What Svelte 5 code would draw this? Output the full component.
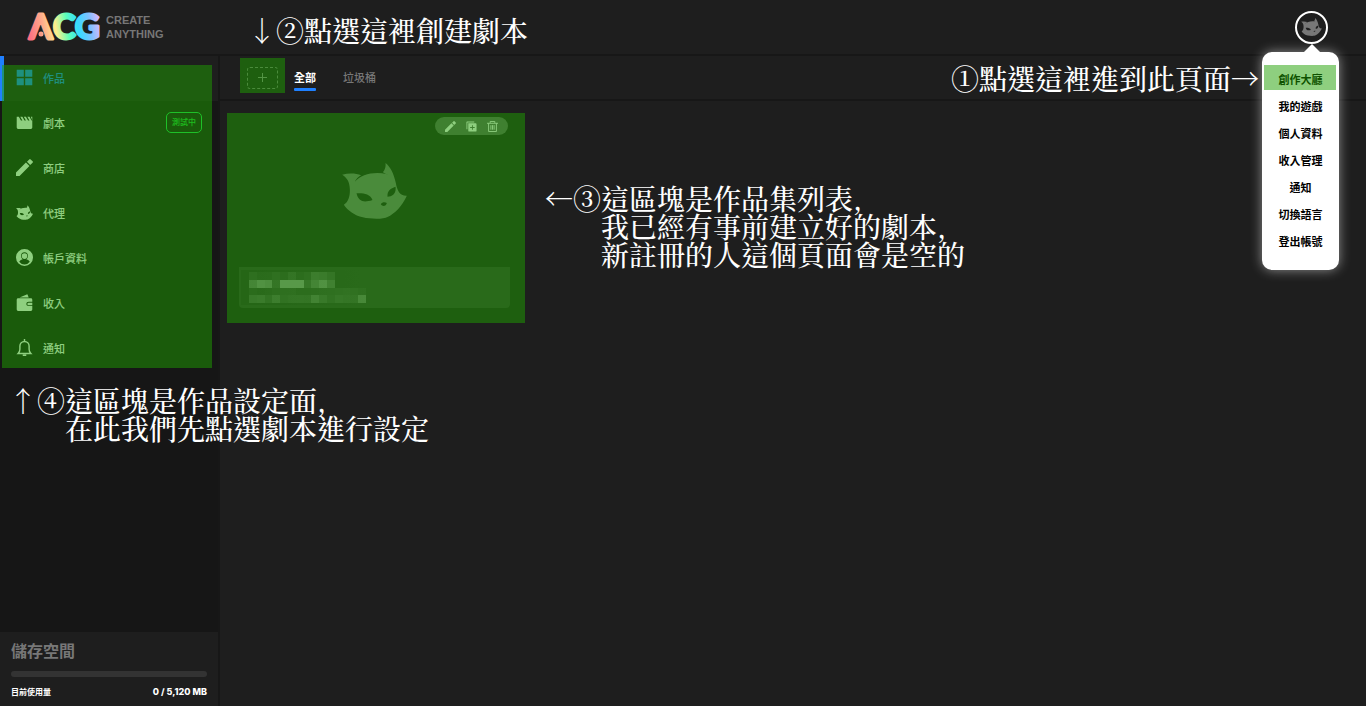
<script lang="ts">
	interface NavItem {
		icon: string;
		label: string;
		badge?: string;
	}

	const nav: NavItem[] = [
		{ icon: 'grid', label: '作品' },
		{ icon: 'clap', label: '劇本', badge: '測試中' },
		{ icon: 'pencil', label: '商店' },
		{ icon: 'cat', label: '代理' },
		{ icon: 'user', label: '帳戶資料' },
		{ icon: 'wallet', label: '收入' },
		{ icon: 'bell', label: '通知' }
	];
	const menu = ['創作大廳', '我的遊戲', '個人資料', '收入管理', '通知', '切換語言', '登出帳號'];

	// brightness of each blurred cell, in percent
	const mosaic = [
		[9, 5, 5, 9, 6, 13, 5, 8, 20, 18, 12, 0, 0, 0, 0],
		[30, 42, 38, 14, 48, 48, 48, 15, 28, 40, 24, 0, 0, 0, 0],
		[6, 4, 5, 7, 8, 8, 5, 5, 6, 7, 7, 8, 9, 8, 6],
		[18, 20, 12, 22, 11, 13, 13, 12, 26, 16, 9, 14, 12, 11, 30]
	];

	let current = $state('作品');
	let tab = $state('全部');
</script>

{#snippet icon(name: string)}
	{#if name === 'cat'}
		<svg class="icon" viewBox="0 0 194 168" aria-hidden="true">
			<path
				fill="currentColor"
				fill-rule="evenodd"
				d="M0 35C20 30 42 31 57 37C48 42 42 48 38 56C57 36 91 25 133 33L138 36L122 28C130 19 131 9 130 0C145 12 154 30 161 60C165 83 173 99 194 98C180 130 157 152 136 162C125 169 87 169 62 163C37 157 17 143 5 125C20 116 24 96 23 77C22 57 16 45 0 35ZM43 91C49 116 65 120 91 111C83 91 62 90 43 91ZM136 101C135 84 144 76 160 71C163 91 151 100 136 101ZM116 124C120 117 128 117 134 120C132 130 121 132 116 124Z"
			/>
		</svg>
	{:else}
		<svg class="icon" viewBox="0 0 24 24" fill="currentColor" aria-hidden="true">
			{#if name === 'grid'}
				<path d="M1 1h10v10H1zM13 1h10v10H13zM1 13h10v10H1zM13 13h10v10H13z" />
			{:else if name === 'clap'}
				<path d="M1 4h3l3 5h2L6 4h3l3 5h2l-3-5h3l3 5h2l-3-5h3l3 5h1l-2-5h2v15q0 2-2 2H3q-2 0-2-2z" />
			{:else if name === 'pencil'}
				<path d="M0 19V24h5L19 10 14 5zM23.400 5.300q1-1 0-2L20.700.600q-1-1-2 0L15.500 4 20 8.500z" />
			{:else if name === 'user'}
				<path
					fill-rule="evenodd"
					d="M12 0a12 12 0 1 0 0 24 12 12 0 0 0 0-24zM4.500 18q2-3 5-3.500C5.500 11 6.500 4.500 12 4.500s6.500 6.500 2.500 10q3 .5 5 3.500-3 4-7.500 4t-7.500-4z"
				/>
				<circle cx="12" cy="10" r="4" />
			{:else if name === 'wallet'}
				<path d="M5 5 16 .5l2 4.500z" />
				<path
					fill-rule="evenodd"
					d="M3 6h18q2 0 2 2v3h-5q-3.500 0-3.500 3t3.500 3h5v5q0 2-2 2H3q-2 0-2-2V8q0-2 2-2z"
				/>
				<path d="M18 12.200h5v3.600h-5q-2 0-2-1.800t2-1.800z" />
			{:else if name === 'bell'}
				<path
					fill="none"
					stroke="currentColor"
					stroke-width="2"
					d="M12 0v3M3 20.500h18c-2-2-2.500-3-2.500-6V10a6.500 6.500 0 0 0-13 0v4.500c0 3-.5 4-2.500 6zM9.500 23h5"
				/>
			{:else if name === 'copy'}
				<path d="M1 2q0-1 1-1h16v2H3v15H1z" />
				<path fill-rule="evenodd" d="M5 5h16q2 0 2 2v14q0 2-2 2H7q-2 0-2-2zM13 9v4H9v2h4v4h2v-4h4v-2h-4V9z" />
			{:else if name === 'trash'}
				<path
					fill="none"
					stroke="currentColor"
					stroke-width="2"
					d="M0 5h24M7 4V1h10v3M3.500 5v18h17V5M8.500 9v10M12 9v10M15.500 9v10"
				/>
			{/if}
		</svg>
	{/if}
{/snippet}

<div class="page">
	<header class="top">
		<a class="brand" href="#home">
			<svg class="mark" viewBox="0 0 73 28" role="img" aria-label="ACG">
				<linearGradient id="rainbow" gradientUnits="userSpaceOnUse" x1="0" y1="20" x2="73" y2="8">
					<stop offset="0" stop-color="#ff6b80" />
					<stop offset="0.22" stop-color="#ffae8c" />
					<stop offset="0.38" stop-color="#fff08c" />
					<stop offset="0.54" stop-color="#5dffb8" />
					<stop offset="0.68" stop-color="#35dcff" />
					<stop offset="0.84" stop-color="#7cc0ff" />
					<stop offset="1" stop-color="#e4b8ff" />
				</linearGradient>
				<g fill="url(#rainbow)" stroke="url(#rainbow)" stroke-width="3" stroke-linejoin="round">
					<text x="1" y="26">Λ</text>
					<text x="25" y="26">C</text>
					<text x="47" y="26">G</text>
					<circle cx="13" cy="21" r="1" />
				</g>
			</svg>
			<span class="slogan">CREATE<br />ANYTHING</span>
		</a>
		<div class="account">
			<button class="avatar" aria-label="帳號">{@render icon('cat')}</button>
			<nav class="menu">
				{#each menu as item, i (item)}
					<a href="#{item}" class:marked={i === 0}>{item}</a>
				{/each}
			</nav>
		</div>
	</header>

	<aside class="side">
		<nav class="nav">
			{#each nav as item (item.label)}
				<a
					href="#{item.label}"
					class:active={current === item.label}
					onclick={() => (current = item.label)}
				>
					{@render icon(item.icon)}
					<span>{item.label}</span>
					{#if item.badge}<small class="badge">{item.badge}</small>{/if}
				</a>
			{/each}
			<div class="hl hl-nav"></div>
		</nav>
		<section class="storage">
			<h2>儲存空間</h2>
			<div class="bar"></div>
			<div class="usage"><span>目前使用量</span><b>0 / 5,120 MB</b></div>
		</section>
	</aside>

	<main class="main">
		<div class="tabs">
			<div class="create">
				<button aria-label="新增">
					<svg viewBox="0 0 9 9" aria-hidden="true"><path d="M4.500 0v9M0 4.500h9" /></svg>
				</button>
				<div class="hl hl-create"></div>
			</div>
			{#each ['全部', '垃圾桶'] as name (name)}
				<button class="tab" class:on={tab === name} onclick={() => (tab = name)}>{name}</button>
			{/each}
		</div>
		<div class="list">
			<article class="card">
				<div class="cover">{@render icon('cat')}</div>
				<div class="info">
					<div class="mosaic">
						{#each mosaic as row}
							{#each row as level}
								<i style="opacity: {level / 100}"></i>
							{/each}
						{/each}
					</div>
				</div>
				<div class="tools">
					<button aria-label="編輯">{@render icon('pencil')}</button>
					<button aria-label="複製">{@render icon('copy')}</button>
					<button aria-label="刪除">{@render icon('trash')}</button>
				</div>
				<div class="hl hl-card"></div>
			</article>
		</div>
	</main>

	<div class="note n1"><p>①點選這裡進到此頁面→</p></div>
	<div class="note n2">
		<span class="arrow">↓</span><span>②</span>
		<p>點選這裡創建劇本</p>
	</div>
	<div class="note n3">
		<span class="arrow">←</span><span>③</span>
		<p>這區塊是作品集列表,<br />我已經有事前建立好的劇本,<br />新註冊的人這個頁面會是空的</p>
	</div>
	<div class="note n4">
		<span class="arrow">↑</span><span>④</span>
		<p>這區塊是作品設定面,<br />在此我們先點選劇本進行設定</p>
	</div>
</div>

<style>
	:global(body) {
		margin: 0;
		background: #1e1e1e;
	}
	.page {
		position: relative;
		display: grid;
		grid-template: 54px 1fr / 218px 1fr;
		gap: 2px;
		min-height: 100vh;
		background: #171717;
		color: #fff;
		font-family: 'Liberation Sans', 'Noto Sans CJK TC', sans-serif;
		font-size: 11px;
	}
	a {
		color: inherit;
		text-decoration: none;
	}
	button {
		padding: 0;
		border: 0;
		background: none;
		color: inherit;
		font: inherit;
		cursor: pointer;
	}
	.icon {
		display: block;
		width: 17px;
		height: 17px;
		flex: none;
	}
	.hl {
		position: absolute;
		background: rgba(30, 160, 0, 0.5);
		pointer-events: none;
	}

	.top {
		grid-column: 1 / -1;
		display: flex;
		align-items: center;
		justify-content: space-between;
		padding: 0 38px 0 28px;
		background: #1e1e1e;
	}
	.brand {
		display: flex;
		align-items: center;
		gap: 5px;
	}
	.mark {
		width: 73px;
		height: 28px;
		overflow: visible;
		font: 700 34px Lato, sans-serif;
	}
	.slogan {
		color: #777;
		font-weight: 700;
		line-height: 14px;
	}
	.account {
		position: relative;
	}
	.avatar {
		display: grid;
		place-items: center;
		box-sizing: border-box;
		width: 33px;
		height: 33px;
		border: 2px solid #fff;
		border-radius: 50%;
		color: #777;
	}
	.avatar .icon {
		width: 21px;
		height: 18px;
	}
	.menu {
		position: absolute;
		z-index: 2;
		top: 41px;
		right: -11px;
		display: flex;
		flex-direction: column;
		width: 77px;
		padding: 15px 0 14px;
		border-radius: 10px;
		background: #fff;
		box-shadow: 0 0 12px rgba(255, 255, 255, 0.5);
		color: #000;
		font-weight: 700;
		line-height: 27px;
		text-align: center;
	}
	.menu::before {
		content: '';
		position: absolute;
		top: -8px;
		right: 19px;
		border: 8px solid transparent;
		border-top: 0;
		border-bottom-color: #fff;
	}
	.menu .marked {
		position: relative;
	}
	.menu .marked::after {
		content: '';
		position: absolute;
		inset: -2px 3px 4px 2px;
		background: rgba(30, 160, 0, 0.5);
	}

	.side {
		display: flex;
		flex-direction: column;
		justify-content: space-between;
		background: #161616;
	}
	.nav {
		position: relative;
	}
	.nav a {
		display: flex;
		align-items: center;
		gap: 10px;
		box-sizing: border-box;
		height: 45px;
		padding: 0 16px 2px 12px;
		border-left: 4px solid transparent;
		color: #fff;
		font-weight: 500;
	}
	.nav a.active {
		border-color: #1f80ff;
		background: #1e1e1e;
		color: #1f80ff;
	}
	.badge {
		margin-left: auto;
		padding: 0 5px;
		border: 1px solid #1ee050;
		border-radius: 5px;
		color: #1ed83c;
		font-size: 8px;
		line-height: 19px;
	}
	.hl-nav {
		inset: 9px 6px 3px 2px;
	}
	.storage {
		padding: 10px 11px 7px;
		background: #1e1e1e;
	}
	.storage h2 {
		margin: 0 0 9px;
		color: #777;
		font-size: 16px;
		font-weight: 700;
		line-height: 20px;
	}
	.bar {
		height: 6px;
		border-radius: 3px;
		background: #333;
	}
	.usage {
		display: flex;
		justify-content: space-between;
		margin-top: 8px;
		font: 700 8px/14px Inter, 'Noto Sans CJK TC', sans-serif;
	}
	.usage b {
		font-weight: 800;
		font-size: 9px;
	}

	.main {
		display: grid;
		grid-template-rows: 43px 1fr;
		gap: 2px;
	}
	.tabs,
	.list {
		background: #1e1e1e;
	}
	.tabs {
		display: flex;
		padding-left: 27px;
	}
	.create {
		position: relative;
		display: flex;
		align-items: center;
		margin-right: 16px;
	}
	.create button {
		display: grid;
		place-items: center;
		width: 31px;
		height: 22px;
		border: 1px dashed #777;
		border-radius: 3px;
		box-sizing: border-box;
	}
	.create svg {
		width: 9px;
		height: 9px;
		stroke: #888;
	}
	.hl-create {
		inset: 2px -7px 6px;
	}
	.tab {
		position: relative;
		margin-right: 27px;
		padding-bottom: 2px;
		color: #777;
		font-weight: 500;
	}
	.tab.on {
		color: #fff;
		font-weight: 700;
	}
	.tab.on::after {
		content: '';
		position: absolute;
		inset: auto 0 8px;
		height: 3px;
		border-radius: 1px;
		background: #1f80ff;
	}
	.list {
		padding: 14px 19px;
	}
	.card {
		position: relative;
		width: 271px;
	}
	.cover {
		display: grid;
		place-items: center;
		height: 152px;
	}
	.cover .icon {
		width: 65px;
		height: 56px;
		color: #777;
	}
	.info {
		height: 41px;
		box-sizing: border-box;
		padding: 3px 2px;
		border-radius: 0 0 4px 4px;
		background: #353535;
	}
	.mosaic {
		display: grid;
		grid-template: repeat(4, 1fr) / repeat(15, 1fr);
		box-sizing: border-box;
		width: 133px;
		height: 35px;
		padding: 2px 8px 2px;
		background: linear-gradient(90deg, #2c2c2c, #353535);
	}
	.mosaic i {
		background: #fff;
	}
	.tools {
		position: absolute;
		top: 2px;
		right: 2px;
		display: flex;
		align-items: center;
		justify-content: center;
		gap: 10px;
		width: 73px;
		height: 18px;
		border-radius: 9px;
		background: #606060;
	}
	.tools .icon {
		width: 11px;
		height: 11px;
	}
	.hl-card {
		inset: -2px -15px -15px -12px;
	}

	.note {
		position: absolute;
		display: flex;
		font-family: 'Noto Serif CJK TC', 'Noto Serif CJK SC', 'Noto Serif CJK JP', 'Noto Sans CJK TC', serif;
		font-size: 28px;
		font-weight: 500;
		line-height: 28px;
		white-space: nowrap;
	}
	.note p {
		margin: 0;
	}
	.arrow {
		width: 28px;
		text-align: center;
	}
	.n1 {
		top: 64px;
		right: 107px;
	}
	.n2 {
		top: 16px;
		left: 248px;
	}
	.n3 {
		top: 184px;
		left: 545px;
	}
	.n4 {
		top: 386px;
		left: 9px;
	}
</style>
